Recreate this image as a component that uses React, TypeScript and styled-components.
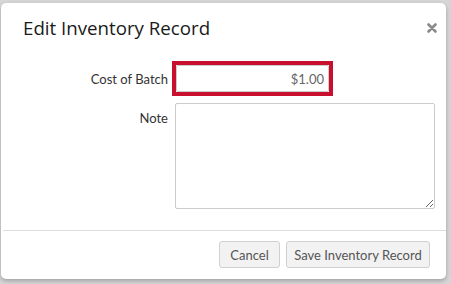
import styled, { createGlobalStyle } from 'styled-components'

const Global = createGlobalStyle`
  html, body { margin: 0; padding: 0; }
  body { background: #d6d6d6; font-family: Lato, "Open Sans", sans-serif; }
`

const Backdrop = styled.div`
  width: 451px;
  height: 284px;
  overflow: hidden;
  background: #d6d6d6;
  padding: 3px 0 0 1px;
  box-sizing: border-box;
`

const Modal = styled.div`
  width: 445px;
  height: 276px;
  box-sizing: border-box;
  background: #fff;
  border-radius: 5px;
  box-shadow: 0 2px 4px rgba(0,0,0,0.25);
  display: flex;
  flex-direction: column;
`

const Header = styled.div`
  display: flex;
  justify-content: space-between;
  align-items: center;
  box-sizing: border-box;
  height: 44px;
  padding: 4px 9px 0 22px;
`

const Title = styled.h3`
  margin: 0;
  font-family: "Open Sans", sans-serif;
  font-weight: 400;
  font-size: 18.7px;
  color: #1a1a1a;
`

const Close = styled.button`
  border: 0;
  background: none;
  padding: 0;
  margin-top: 2px;
  cursor: pointer;
  display: flex;
`

const Body = styled.div`
  display: grid;
  grid-template-columns: 147px 1fr;
  column-gap: 7px;
  row-gap: 7px;
  padding: 14px 10px 0 20px;
  align-items: start;
`

const Label = styled.label<{ $top: number }>`
  font-size: 13px;
  color: #333;
  text-align: right;
  padding-top: ${p => p.$top}px;
`

const Highlight = styled.div`
  display: flex;
  width: max-content;
  margin-left: -3px;
  border: 4px solid #c8102e;
`

const CostInput = styled.input`
  width: 153px;
  height: 27px;
  box-sizing: border-box;
  margin: 0;
  border: 1px solid #ccc;
  border-radius: 2px;
  outline: none;
  text-align: right;
  padding: 0 4px;
  font-family: Lato, sans-serif;
  font-size: 13px;
  color: #666;
  background: #fff;
`

const Note = styled.textarea`
  width: 260px;
  height: 106px;
  box-sizing: border-box;
  margin: 0;
  border: 1px solid #ccc;
  border-radius: 2px;
  resize: both;
  font-family: Lato, sans-serif;
  font-size: 13px;
  display: block;
`

const Divider = styled.hr`
  margin: 21px 0 0 2px;
  border: 0;
  border-top: 1px solid #ddd;
  width: 443px;
`

const Footer = styled.div`
  display: flex;
  justify-content: flex-end;
  gap: 6px;
  padding: 10px 16px 0 0;
`

const Button = styled.button<{ $w: number }>`
  width: ${p => p.$w}px;
  height: 27px;
  box-sizing: border-box;
  background: #f2f2f2;
  border: 1px solid #d0d0d0;
  border-radius: 3px;
  font-family: Lato, sans-serif;
  font-size: 13px;
  color: #555;
  padding: 0;
`

export default function App() {
  return (
    <>
      <Global />
      <Backdrop>
        <Modal>
          <Header>
            <Title>Edit Inventory Record</Title>
            <Close aria-label="Close">
              <svg width="10" height="10" viewBox="0 0 10 10">
                <path d="M1.5 1.5 L8.5 8.5 M8.5 1.5 L1.5 8.5" stroke="#8a8a8a" strokeWidth="2.6" strokeLinecap="round" />
              </svg>
            </Close>
          </Header>
          <Body>
            <Label $top={10}>Cost of Batch</Label>
            <Highlight>
              <CostInput defaultValue="$1.00" />
            </Highlight>
            <Label $top={7}>Note</Label>
            <Note />
          </Body>
          <Divider />
          <Footer>
            <Button $w={61}>Cancel</Button>
            <Button $w={144}>Save Inventory Record</Button>
          </Footer>
        </Modal>
      </Backdrop>
    </>
  )
}
